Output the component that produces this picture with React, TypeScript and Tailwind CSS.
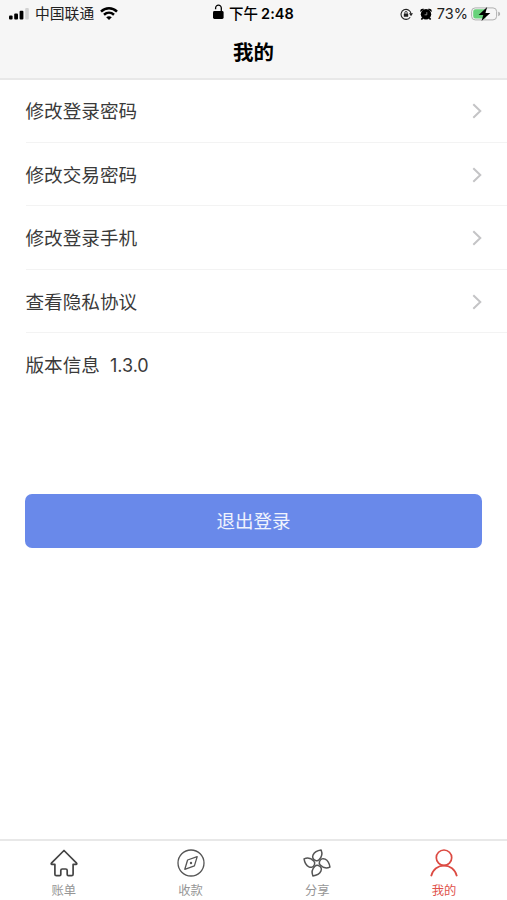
import { memo } from "react";

type IconProps = React.ComponentPropsWithoutRef<"svg">;

const SignalIcon: React.FC<IconProps> = (props) => (
  <svg viewBox="0 0 20 12" fill="#000" {...props}>
    <rect x="0" y="7.5" width="3.6" height="4" rx="1" />
    <rect x="5.2" y="5.5" width="3.8" height="6" rx="1" />
    <rect x="10.6" y="2.8" width="3.8" height="8.7" rx="1" />
    <rect x="16.2" y="0" width="3.6" height="11.5" rx="1" fill="#d2d2d2" />
  </svg>
);

const WifiIcon: React.FC<IconProps> = (props) => (
  <svg viewBox="0 0 18 13" fill="none" stroke="#000" strokeWidth="2.5" {...props}>
    <path d="M1 4.6C5.6.2 12.4.2 17 4.6" />
    <path d="M4 7.8c3-2.7 7-2.7 10 0" />
    <path d="M6.2 10.2c1.7-1.4 3.9-1.4 5.6 0L9 13z" fill="#000" stroke="none" />
  </svg>
);

const LockIcon: React.FC<IconProps> = (props) => (
  <svg viewBox="0 0 11 16" fill="none" {...props}>
    <rect x="0" y="7" width="10.6" height="8" rx="1.4" fill="#000" />
    <path d="M2.6 5.2V4c0-3.8 5.7-3.8 5.7 0v3.5" stroke="#000" strokeWidth="1.3" />
  </svg>
);

const RotationLockIcon: React.FC<IconProps> = (props) => (
  <svg viewBox="0 0 13 12" fill="none" {...props}>
    <path
      d="M10.2 9.2A5 5 0 1 1 11 5.6"
      stroke="#222"
      strokeWidth="1.1"
    />
    <path d="M9 5.2h4l-2 3z" fill="#222" />
    <rect x="3.8" y="5.4" width="4.4" height="3.4" rx=".5" fill="#222" />
    <path d="M4.8 5.6V4.7c0-1.7 2.4-1.7 2.4 0v.9" stroke="#222" strokeWidth=".9" />
  </svg>
);

const AlarmIcon: React.FC<IconProps> = (props) => (
  <svg viewBox="0 0 12 12" {...props}>
    <path d="M2.6 10 1.4 11.6M9.4 10l1.2 1.6" stroke="#000" strokeWidth="1.6" />
    <circle cx="6" cy="6.3" r="5.2" fill="#000" />
    <path d="M.4 4C-.2 1 2 0 4.4 1zM11.6 4C12.2 1 10 0 7.6 1z" fill="#000" />
    <path d="M6.8 4.2v2.6H4.6" fill="none" stroke="#aaa" strokeWidth=".8" />
  </svg>
);

const BatteryIcon: React.FC<IconProps> = (props) => (
  <svg viewBox="0 0 30 14" {...props}>
    <rect x=".6" y=".9" width="25" height="12" rx="3.6" fill="#f6f6f6" stroke="#b0b0b0" />
    <path d="M4.4 2.3h10v9.2h-10A2.2 2.2 0 0 1 2.2 9.3V4.5a2.2 2.2 0 0 1 2.2-2.2z" fill="#67d27a" />
    <path d="M27.2 4.8c2.6.6 2.6 3.8 0 4.4z" fill="#b0b0b0" />
    <path d="M16.2 0 7.6 7.9h4.7L10.5 14l8.8-8.1h-4.9z" fill="#000" />
  </svg>
);

const ChevronIcon: React.FC<IconProps> = (props) => (
  <svg viewBox="0 0 10 16" fill="none" stroke="#c4c4c6" strokeWidth="2" {...props}>
    <path d="m1.3 1.2 7 6.8-7 6.8" />
  </svg>
);

const HomeIcon: React.FC<IconProps> = (props) => (
  <svg
    viewBox="0 0 28 28"
    fill="none"
    stroke="#444"
    strokeWidth="1.7"
    strokeLinejoin="round"
    {...props}
  >
    <path d="M14 1.5 1.4 14.2c-.5.6-.2 1.2.5 1.2h3v9.8c0 .9.6 1.5 1.5 1.5h3.2c.7 0 1.2-.5 1.2-1.2v-4c0-.9.6-1.5 1.5-1.5h3.4c.9 0 1.5.6 1.5 1.5v4c0 .7.5 1.2 1.2 1.2h3.2c.9 0 1.5-.6 1.5-1.5v-9.8h3c.7 0 1-.6.5-1.2z" />
  </svg>
);

const CompassIcon: React.FC<IconProps> = (props) => (
  <svg viewBox="0 0 28 28" fill="none" stroke="#555" strokeWidth="1.3" {...props}>
    <circle cx="14" cy="14" r="13" />
    <path d="M20.2 7.6 17.4 16.9 7.8 20.3l2.8-9.3z" strokeLinejoin="round" />
    <circle cx="14" cy="14" r="1.2" fill="#555" stroke="none" />
  </svg>
);

const FanIcon: React.FC<IconProps> = (props) => (
  <svg viewBox="-14 -14 28 28" fill="none" stroke="#555" strokeWidth="1.5" {...props}>
    {[0, 90, 180, 270].map((angle) => (
      <path
        key={angle}
        d="M-1.6-2.4C-7.4-4.2-5-11.4 3.2-13.2 5-9.6 4.2-6 1.8-3.4.8-2.2-.2-2-1.6-2.4"
        transform={`rotate(${angle + 4})`}
        strokeLinejoin="round"
        strokeLinecap="round"
      />
    ))}
  </svg>
);

const UserIcon: React.FC<IconProps> = (props) => (
  <svg viewBox="0 0 28 28" fill="none" stroke="#dc4a42" strokeWidth="1.7" {...props}>
    <circle cx="14" cy="8.7" r="7.7" />
    <path d="M1.1 27.2C4.2 13.1 23.8 13.1 26.9 27.2" />
  </svg>
);

const menuItems = ["修改登录密码", "修改交易密码", "修改登录手机", "查看隐私协议"];

const tabs = [
  { label: "账单", Icon: HomeIcon },
  { label: "收款", Icon: CompassIcon },
  { label: "分享", Icon: FanIcon },
  { label: "我的", Icon: UserIcon, isActive: true },
];

const StatusBar = () => (
  <div className="grid h-7 grid-cols-3 items-center text-[15px] leading-none text-[#222]">
    <div className="flex items-center pl-[9px]">
      <SignalIcon className="h-3 w-5" />
      <span className="ml-1.5 text-[14.8px]">中国联通</span>
      <WifiIcon className="mb-0.5 ml-1.5 h-[13px] w-[18px]" />
    </div>
    <div className="flex items-center justify-center font-medium text-black">
      <LockIcon className="-mt-1 mr-[5px] h-4 w-[11px]" />
      <span className="text-[14.5px]">下午</span>
      <span className="ml-[3px] text-[14.5px] font-semibold tracking-[0.1px]">2:48</span>
    </div>
    <div className="flex items-center justify-end pr-1.5">
      <RotationLockIcon className="h-3 w-[13px]" />
      <AlarmIcon className="ml-[7px] size-3" />
      <span className="ml-[5px] text-[14.5px]">73%</span>
      <BatteryIcon className="ml-[3px] h-3.5 w-[30px]" />
    </div>
  </div>
);

const App: React.FC = () => (
  <div className="flex h-[900px] w-full flex-col bg-white font-['Inter','Noto_Sans_CJK_SC',sans-serif] text-[#3a3a3a]">
    <header className="h-20 shrink-0 border-b-2 border-[#e8e8e8] bg-[#f6f6f6]">
      <StatusBar />
      <h1 className="pt-px text-center text-[20.5px] leading-[48px] font-bold text-black">
        我的
      </h1>
    </header>

    <main className="flex-1">
      <ul className="-mt-px pl-[25.5px] text-[18.6px]">
        {menuItems.map((label) => (
          <li
            key={label}
            className="flex h-[63.5px] items-center justify-between border-b border-[#f3f3f3] pt-0.5 pr-[25px]"
          >
            <span className="pt-0.5">{label}</span>
            <ChevronIcon className="h-4 w-2.5" />
          </li>
        ))}
        <li className="flex h-[63.5px] items-center pt-0.5">
          版本信息<span className="ml-2.5 text-[18px]">1.3.0</span>
        </li>
      </ul>

      <div className="mt-[97.5px] px-[25px]">
        <button className="h-[54px] w-full rounded-[7px] bg-[#6989ea] pt-0.5 text-[18.5px] text-white/90">
          退出登录
        </button>
      </div>
    </main>

    <nav className="grid h-[61px] shrink-0 grid-cols-4 border-t-2 border-[#e8e8e8] bg-white">
      {tabs.map(({ label, Icon, isActive }) => (
        <div key={label} className="flex flex-col items-center pt-2 pl-px">
          <Icon className="size-7" />
          <span
            className={`mt-1.5 text-[12.3px] leading-[15px] ${isActive ? "text-[#e0524b]" : "text-[#969696]"}`}
          >
            {label}
          </span>
        </div>
      ))}
    </nav>
  </div>
);

export default memo(App);
